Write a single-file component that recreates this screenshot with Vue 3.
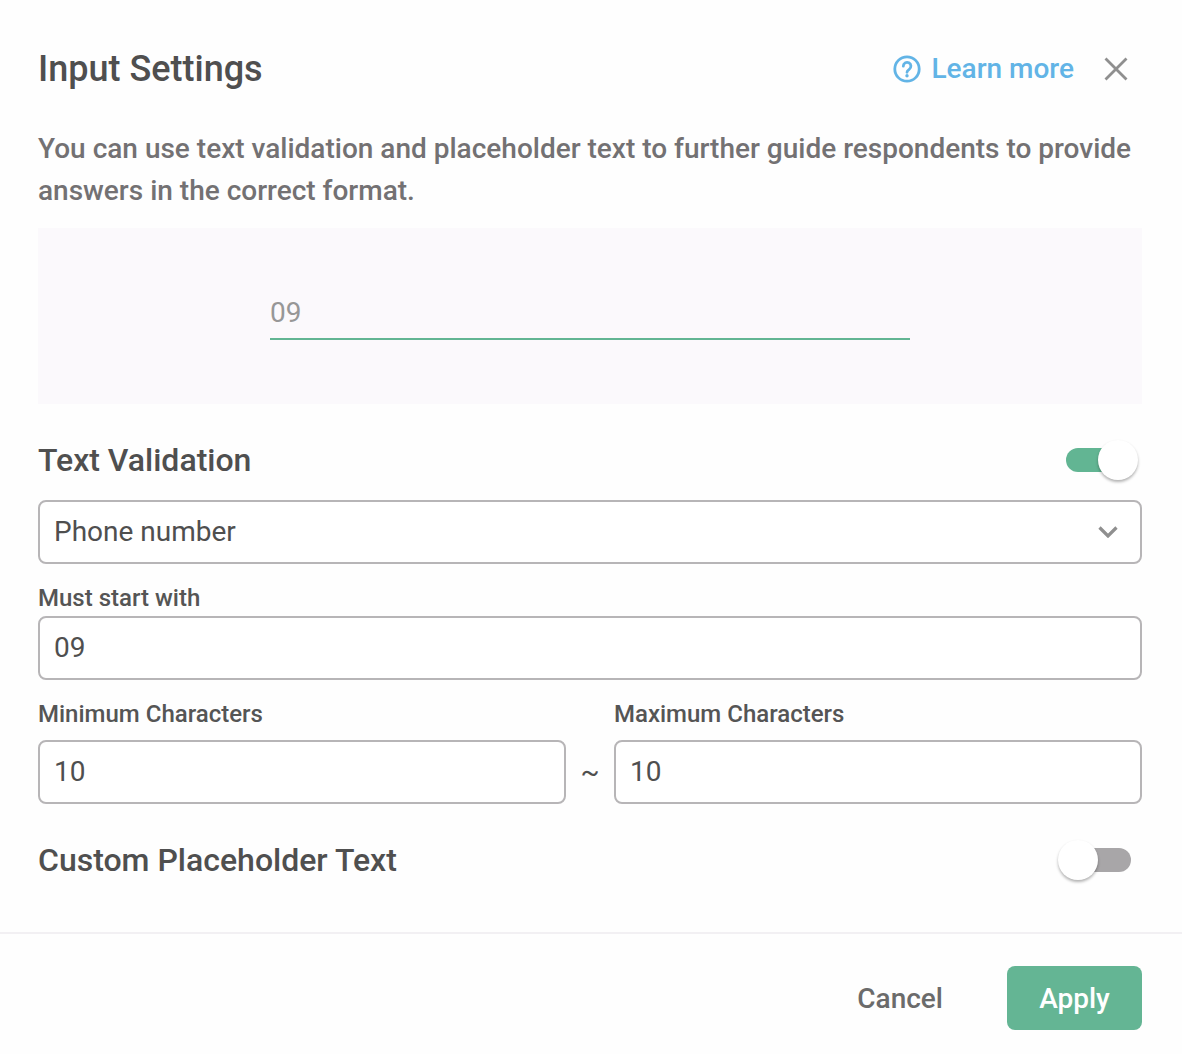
<script setup>
const rangeFields = [
  { label: 'Minimum Characters', value: '10' },
  { label: 'Maximum Characters', value: '10' },
]
</script>

<template>
  <div class="dialog">
    <header class="head">
      <h1 class="title">Input Settings</h1>
      <a class="learn">
        <svg class="help" viewBox="0 0 28 28" width="28" height="28" fill="none">
          <circle cx="14" cy="14" r="12.2" stroke="#62b4e6" stroke-width="2.8" />
          <path d="M10.300 11.200a3.800 3.800 0 1 1 5.900 3.100c-1.400.9-2.200 1.500-2.200 3" stroke="#62b4e6" stroke-width="2.800" stroke-linecap="round" fill="none" />
          <circle cx="14" cy="20.800" r="1.700" fill="#62b4e6" />
        </svg>
        <span class="learn-text">Learn more</span>
      </a>
      <svg class="close" viewBox="0 0 24 24" width="24" height="24" fill="none">
        <path d="M1.500 1.500l21 21M22.500 1.500l-21 21" stroke="#8f8f8f" stroke-width="2.800" />
      </svg>
    </header>

    <p class="desc">You can use text validation and placeholder text to further guide respondents to provide answers in the correct format.</p>

    <div class="preview">
      <div class="answer">09</div>
    </div>

    <div class="section validation">
      <h2 class="section-title">Text Validation</h2>
      <span class="switch on"><span class="knob"></span></span>
    </div>

    <div class="box select">
      <span>Phone number</span>
      <svg viewBox="0 0 20 12" width="20" height="12" fill="none">
        <path d="M1.500 1.500L10 10l8.500-8.500" stroke="#8f8f8f" stroke-width="3.200" />
      </svg>
    </div>

    <label class="label start">Must start with</label>
    <div class="box">09</div>

    <div class="range">
      <div v-for="(field, i) in rangeFields" :key="field.label" class="range-item">
        <label class="label range-label">{{ field.label }}</label>
        <div class="box">{{ field.value }}</div>
        <span v-if="i === 0" class="tilde">~</span>
      </div>
    </div>

    <div class="section custom">
      <h2 class="section-title">Custom Placeholder Text</h2>
      <span class="switch off"><span class="knob"></span></span>
    </div>

    <footer class="foot">
      <button class="cancel" type="button">Cancel</button>
      <button class="apply" type="button">Apply</button>
    </footer>
  </div>
</template>

<style>
html, body { background: #fff; }
</style>

<style scoped>
.dialog {
  width: 1182px;
  height: 1054px;
  box-sizing: border-box;
  padding: 0 40px 0 38px;
  background: #fefefe;
  font-family: Roboto, "Liberation Sans", sans-serif;
  color: #444;
  overflow: hidden;
}
.head {
  display: flex;
  align-items: center;
  height: 48px;
  padding-top: 45px;
}
.title {
  margin: 0 auto 0 0;
  font-size: 36px;
  font-weight: 500;
  color: #4f4f4f;
}
.learn {
  display: flex;
  align-items: center;
  gap: 11px;
  font-size: 28px;
  font-weight: 500;
  line-height: 28px;
  color: #62b4e6;
}
.help { margin-left: 1px; }
.learn-text { margin-left: -1px; margin-top: -1px; }
.close { margin-left: 30px; margin-right: 14px; }
.desc {
  margin: 35px 0 0;
  font-size: 28px;
  line-height: 42px;
  font-weight: 500;
  color: #737173;
}
.preview {
  height: 176px;
  margin-top: 16px;
  background: #fbf9fc;
  box-sizing: border-box;
  padding: 65px 232px 0;
}
.answer {
  height: 47px;
  box-sizing: border-box;
  border-bottom: 2px solid #62b593;
  font-size: 28px;
  line-height: 40px;
  color: #979797;
}
.section {
  display: flex;
  align-items: center;
  justify-content: space-between;
}
.validation { height: 40px; margin-top: 36px; }
.custom { height: 40px; margin-top: 36px; }
.section-title {
  margin: 0;
  font-size: 32px;
  font-weight: 500;
  color: #4f4f4f;
}
.switch {
  position: relative;
  display: block;
  width: 64px;
  height: 24px;
  border-radius: 12px;
}
.switch.on { background: #62b593; margin-right: 12px; }
.switch.off { background: #a8a6a8; margin-right: 11px; }
.knob {
  position: absolute;
  top: -8px;
  width: 40px;
  height: 40px;
  border-radius: 50%;
  background: #fff;
  box-shadow: 0 2px 3px rgba(0, 0, 0, 0.3);
}
.on .knob { right: -8px; }
.off .knob { left: -9px; }
.box {
  height: 64px;
  box-sizing: border-box;
  border: 2px solid #b7b5b7;
  border-radius: 8px;
  padding: 0 14px 2px;
  display: flex;
  align-items: center;
  font-size: 28px;
  color: #4f4f4f;
  background: #fff;
}
.select {
  justify-content: space-between;
  margin-top: 20px;
  padding-right: 22px;
}
.select svg { margin-top: 2px; }
.label {
  display: block;
  font-size: 24px;
  font-weight: 500;
  line-height: 28px;
  color: #555;
}
.start { margin-top: 20px; margin-bottom: 4px; }
.range {
  display: grid;
  grid-template-columns: 1fr 1fr;
  column-gap: 48px;
  margin-top: 20px;
}
.range-label { margin-bottom: 12px; }
.range-item { position: relative; }
.tilde {
  position: absolute;
  left: 100%;
  bottom: 16px;
  width: 48px;
  text-align: center;
  font-size: 28px;
  color: #4f4f4f;
}
.foot {
  display: flex;
  justify-content: flex-end;
  align-items: center;
  margin: 52px -40px 0 -38px;
  padding: 32px 40px 0 0;
  border-top: 2px solid #f2f0f3;
}
.cancel, .apply {
  border: 0;
  font-family: inherit;
  font-size: 28px;
  font-weight: 500;
  height: 64px;
  padding: 0;
  border-radius: 8px;
}
.cancel { background: none; color: #6b6b6b; margin-right: 64px; }
.apply { width: 135px; background: #64b594; color: #fff; }
</style>
